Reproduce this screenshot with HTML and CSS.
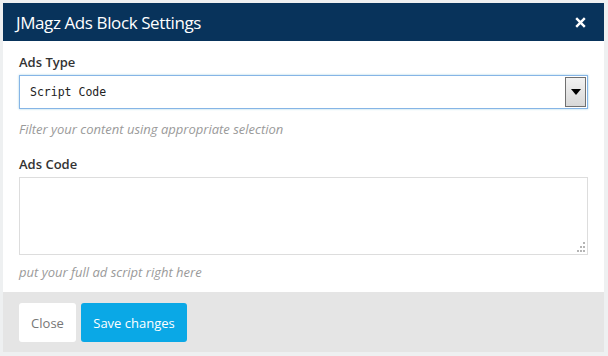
FILE: index.html
```html
<!DOCTYPE html>
<html>
<head>
<meta charset="utf-8">
<link rel="stylesheet" href="styles.css">
</head>
<body>
<div class="modal">
  <div class="modal-header">
    <span class="modal-title">JMagz Ads Block Settings</span>
    <svg class="close-x" width="11" height="11" viewBox="0 0 11 11"><path d="M1.2 1.2 L9.8 9.8 M9.8 1.2 L1.2 9.8" stroke="#fff" stroke-width="2.4" stroke-linecap="butt"/></svg>
  </div>
  <div class="modal-body">
    <div class="field">
      <label class="field-label">Ads Type</label>
      <div class="select">
        <span class="select-value">Script Code</span>
        <span class="select-btn"><svg width="10" height="6" viewBox="0 0 10 6"><path d="M0 0 H10 L5 6 Z" fill="#000"/></svg></span>
      </div>
      <p class="help">Filter your content using appropriate selection</p>
    </div>
    <div class="field">
      <label class="field-label">Ads Code</label>
      <div class="textarea">
        <svg class="grip" width="10" height="10" viewBox="0 0 10 10"><g fill="#b5b5b5"><rect x="8" y="0" width="2" height="2"/><rect x="5" y="4" width="2" height="2"/><rect x="8" y="4" width="2" height="2"/><rect x="2" y="8" width="2" height="2"/><rect x="5" y="8" width="2" height="2"/><rect x="8" y="8" width="2" height="2"/></g></svg>
      </div>
      <p class="help">put your full ad script right here</p>
    </div>
  </div>
  <div class="modal-footer">
    <button class="btn btn-close">Close</button>
    <button class="btn btn-save">Save changes</button>
  </div>
</div>
</body>
</html>
```
FILE: styles.css
```css
html, body {
  margin: 0;
  padding: 0;
}
body {
  background: #eef0f1;
  font-family: "Open Sans", "Noto Sans", sans-serif;
  width: 608px;
  height: 356px;
  overflow: hidden;
}
.modal {
  margin: 3px 0 0 3px;
  width: 601px;
  background: #fff;
  box-sizing: border-box;
}
.modal-header {
  height: 38px;
  background: #08335b;
  display: flex;
  align-items: center;
  justify-content: space-between;
  padding: 0 18px 0 13px;
}
.modal-title {
  color: #fff;
  font-size: 17px;
  letter-spacing: -0.4px;
}
.close-x {
  display: block;
}
.modal-body {
  padding: 12px 16px 11px 16px;
}
.field-label {
  display: block;
  font-size: 13px;
  font-weight: 600;
  color: #333;
  line-height: 18px;
  margin-bottom: 4px;
}
.select {
  height: 34px;
  box-sizing: border-box;
  border: 1px solid #86b5e6;
  box-shadow: 0 0 2px rgba(30,140,190,0.4);
  display: flex;
  align-items: stretch;
  justify-content: space-between;
  background: #fff;
}
.select-value {
  font-family: "DejaVu Sans Mono", "Liberation Mono", monospace;
  font-size: 11.5px;
  color: #222;
  display: flex;
  align-items: center;
  padding-left: 10px;
}
.select-btn {
  width: 19px;
  margin: 1px;
  border: 1px solid #707070;
  background: linear-gradient(#f2f2f2, #d8d8d8);
  display: flex;
  align-items: center;
  justify-content: center;
}
.help {
  margin: 11px 0 17px 0;
  font-size: 13px;
  font-style: italic;
  color: #9a9a9a;
  line-height: 18px;
}
.textarea {
  height: 78px;
  box-sizing: border-box;
  border: 1px solid #ddd;
  position: relative;
}
.grip {
  position: absolute;
  right: 2px;
  bottom: 2px;
}
.field:last-child .help {
  margin: 8px 0 0 0;
}
.modal-footer {
  background: #e5e5e5;
  height: 60px;
  box-sizing: border-box;
  padding: 11px 16px;
  display: flex;
  gap: 5px;
}
.btn {
  height: 39px;
  border: none;
  border-radius: 3px;
  font-family: "Open Sans", "Noto Sans", sans-serif;
  font-size: 13px;
  padding: 0;
  white-space: nowrap;
}
.btn-close {
  background: #fff;
  color: #777;
  width: 57px;
}
.btn-save {
  background: #0aa8e6;
  color: #fff;
  width: 106px;
}
```
